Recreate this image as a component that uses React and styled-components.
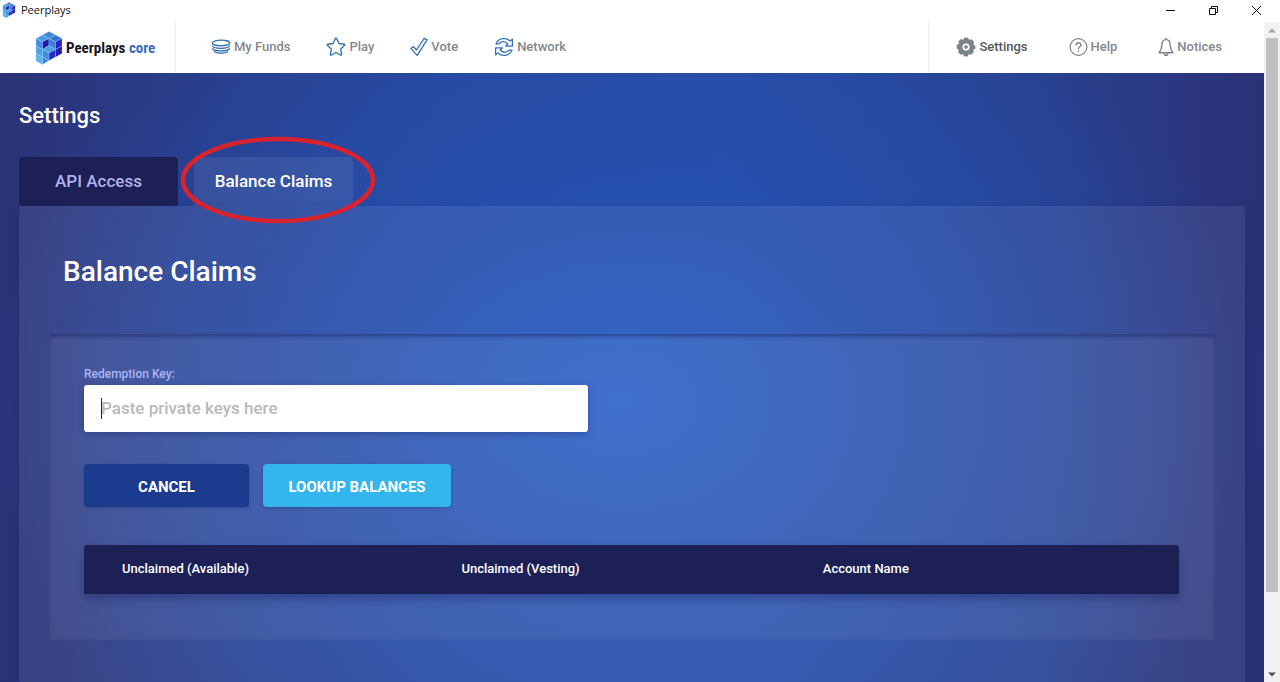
import React, { useState } from 'react';
import styled, { createGlobalStyle } from 'styled-components';

const GlobalStyle = createGlobalStyle`
  * {
    box-sizing: border-box;
  }

  body {
    margin: 0;
    background: #2b3a86;
    font-family: Roboto, 'Liberation Sans', sans-serif;
  }

  button, input {
    font-family: inherit;
  }
`;

const Window = styled.div`
  display: flex;
  flex-direction: column;
  height: 100vh;
  overflow: hidden;
  background: #ffffff;
`;

const TitleBar = styled.div`
  display: flex;
  align-items: center;
  justify-content: space-between;
  flex: none;
  height: 22px;
  padding: 0 2px 2px;
`;

const AppName = styled.div`
  display: flex;
  align-items: center;
  gap: 5px;
  font-family: 'Open Sans', 'Noto Sans', sans-serif;
  font-size: 11px;
  line-height: 20px;
  color: #111111;
`;

const WindowControls = styled.div`
  display: flex;
`;

const WindowButton = styled.button`
  display: flex;
  align-items: center;
  justify-content: center;
  width: 43px;
  height: 20px;
  padding: 0;
  border: none;
  background: none;
  color: #111111;
`;

const Viewport = styled.div`
  display: flex;
  flex: 1;
  min-height: 0;
`;

const Page = styled.div`
  display: flex;
  flex-direction: column;
  flex: 1;
  min-width: 0;
`;

const ScrollTrack = styled.div`
  display: flex;
  flex-direction: column;
  align-items: center;
  width: 16px;
  background: #f1f1f1;
`;

const ScrollArrow = styled.button`
  display: flex;
  align-items: center;
  justify-content: center;
  width: 16px;
  height: 16px;
  padding: 0;
  border: none;
  background: none;
  color: ${props => props.$disabled ? '#a3a3a3' : '#505050'};
`;

const ScrollThumb = styled.div`
  width: 12px;
  height: 84%;
  margin-bottom: auto;
  background: #c1c1c1;
`;

const Header = styled.header`
  display: flex;
  flex: none;
  height: 51px;
  background: #ffffff;
`;

const Brand = styled.a`
  display: flex;
  align-items: center;
  gap: 3px;
  width: 176px;
  padding: 1px 0 0 35px;
  border-right: 1px solid #ececf0;
  text-decoration: none;
`;

const BrandName = styled.span`
  font-family: 'Liberation Sans Narrow', 'Roboto Condensed', Roboto, sans-serif;
  font-size: 15px;
  font-weight: 700;
  white-space: nowrap;
  color: #16161c;

  span {
    color: #3a6db5;
  }
`;

const Nav = styled.nav`
  display: flex;
  align-items: center;
  gap: ${props => props.$gap};
  padding: ${props => props.$padding};
  margin-left: ${props => props.$right ? 'auto' : 0};
  border-left: ${props => props.$right ? '1px solid #ececf0' : 'none'};
`;

const NavLink = styled.a`
  display: flex;
  align-items: center;
  gap: 3px;
  font-size: 13px;
  font-weight: 500;
  text-decoration: none;
  color: ${props => props.$active ? '#54575a' : '#85888b'};

  svg {
    color: ${props => props.$tint};
  }
`;

const Main = styled.main`
  display: flex;
  flex-direction: column;
  flex: 1;
  min-height: 0;
  padding: 28px 19px 0;
  background:
    radial-gradient(ellipse 52% 76% at 49% 54%, #255dc6 0%, rgba(38, 84, 184, 0.7) 40%, rgba(38, 76, 165, 0) 100%),
    linear-gradient(90deg, #2c3276 0%, #2a3a84 10%, #27479a 36%, #274ba1 58%, #28418f 82%, #2c3177 100%);
`;

const PageTitle = styled.h1`
  margin: 0 0 26px;
  font-size: 22px;
  line-height: 30px;
  font-weight: 500;
  color: #ffffff;
`;

const Tabs = styled.div`
  display: flex;
  gap: 16px;
`;

const Tab = styled.button`
  position: relative;
  width: 159px;
  height: 49px;
  padding: 0 0 2px;
  border: none;
  border-radius: 4px 4px 0 0;
  font-size: 17px;
  font-weight: 500;
  color: ${props => props.$active ? '#ffffff' : '#b3b1ee'};
  background: ${props => props.$active ? 'rgba(255, 255, 255, 0.08)' : '#1c2054'};
`;

const Highlight = styled.svg`
  position: absolute;
  left: -14px;
  top: -21px;
  pointer-events: none;
`;

const Panel = styled.section`
  flex: 1;
  padding: 48px 30px 0;
  background: rgba(255, 255, 255, 0.07);
  box-shadow: 0 6px 12px rgba(20, 24, 80, 0.25);
`;

const PanelTitle = styled.h2`
  margin: 0 0 44px 14px;
  font-size: 28px;
  line-height: 36px;
  font-weight: 500;
  color: #ffffff;
`;

const Card = styled.div`
  padding: 32px 36px 46px 35px;
  border-radius: 4px;
  background: rgba(255, 255, 255, 0.06);
  box-shadow:
    inset 0 4px 4px -2px rgba(24, 28, 80, 0.5),
    inset 0 0 4px rgba(24, 28, 90, 0.12);
`;

const Label = styled.label`
  display: block;
  margin-bottom: 3px;
  font-size: 12px;
  line-height: 16px;
  font-weight: 500;
  color: #adb3f5;
`;

const Field = styled.div`
  position: relative;
  width: 46%;
`;

const Caret = styled.span`
  position: absolute;
  left: 17px;
  top: 13px;
  width: 1px;
  height: 21px;
  background: #222222;
`;

const KeyInput = styled.input`
  display: block;
  width: 100%;
  height: 47px;
  padding: 0 17px 2px;
  border: none;
  border-radius: 3px;
  outline: none;
  background: #ffffff;
  font-size: 17px;
  font-weight: 500;
  color: #333333;
  box-shadow: 0 2px 6px rgba(24, 28, 90, 0.35);

  &::placeholder {
    color: #b9b9bb;
    opacity: 1;
  }
`;

const Actions = styled.div`
  display: flex;
  gap: 14px;
  margin: 32px 0 38px;
`;

const Button = styled.button`
  height: 43px;
  min-width: ${props => props.$primary ? '188px' : '165px'};
  padding: 2px 16px 0;
  border: none;
  border-radius: 4px;
  font-size: 15px;
  font-weight: 700;
  color: #ffffff;
  background: ${props => props.$primary ? '#35b5ee' : '#1b3b8f'};
  box-shadow: 0 1px 3px rgba(24, 28, 90, 0.3);
`;

const Table = styled.table`
  width: 100%;
  border-collapse: collapse;
  table-layout: fixed;
  border-radius: 3px 3px 0 0;
  overflow: hidden;
  background: #1c2054;
  box-shadow: 0 5px 10px rgba(24, 28, 90, 0.4);
`;

const HeadCell = styled.th`
  width: ${props => props.$width};
  height: 49px;
  padding: 0 0 2px 38px;
  text-align: left;
  font-size: 13px;
  font-weight: 500;
  color: #ffffff;
`;

const CubeLogo = ({ width, height }) => (
  <svg width={width} height={height} viewBox="0 0 28 34" aria-hidden="true">
    <g stroke="#a3cdf5" strokeWidth="0.35" strokeLinejoin="round">
      <path d="M14 0.5 20.5 4 14 7.5 7.5 4Z" fill="#3f87da" />
      <path d="M7.5 4 14 7.5 7.5 11 1 7.5Z" fill="#4a9ae4" />
      <path d="M20.5 4 27 7.5 20.5 11 14 7.5Z" fill="#3576d0" />
      <path d="M1 7.5 7.5 11V18.5L1 15Z" fill="#3f92e0" />
      <path d="M7.5 11 14 7.5V14.5L7.5 18.5Z" fill="#2418a8" />
      <path d="M14 7.5 20.5 11V18.5L14 14.5Z" fill="#3a80d8" />
      <path d="M20.5 11 27 7.5V15L20.5 18.5Z" fill="#2a22c4" />
      <path d="M14 14.5 20.5 18.5 14 22 7.5 18.5Z" fill="#4a9fe8" />
      <path d="M1 15 7.5 18.5V26L1 22.5Z" fill="#4aa4ea" />
      <path d="M7.5 18.5 14 22V29.5L7.5 26Z" fill="#3c8fe0" />
      <path d="M14 22 20.5 18.5V26L14 29.5Z" fill="#2b2ac8" />
      <path d="M20.5 18.5 27 15V22.5L20.5 26Z" fill="#2119b0" />
      <path d="M1 22.5 7.5 26V33.5L1 30Z" fill="#5ab4f0" />
      <path d="M7.5 26 14 29.5 7.5 33.5Z" fill="#3f86dd" />
    </g>
  </svg>
);

const FundsIcon = () => (
  <svg width="20" height="20" viewBox="0 0 20 20" fill="none" stroke="currentColor" strokeWidth="1.3" aria-hidden="true">
    <ellipse cx="10" cy="6" rx="8.8" ry="2.8" />
    <path d="M1.2 8.8C3 12.2 17 12.2 18.8 8.8M1.2 11.4C3 14.8 17 14.8 18.8 11.4M3 14.6C6 16.8 14 16.8 17 14.6" />
  </svg>
);

const StarIcon = () => (
  <svg width="20" height="20" viewBox="0 0 20 20" fill="none" stroke="currentColor" strokeWidth="1.4" strokeLinejoin="round" aria-hidden="true">
    <path d="M10 1.2Q10.6 1.2 10.9 2L12.9 6.5 18 7.2Q19.4 7.5 18.4 8.6L14.7 12 15.6 17.1Q15.6 18.6 14.3 18L10 15.5 5.7 18Q4.4 18.6 4.4 17.1L5.3 12 1.6 8.6Q0.6 7.5 2 7.2L7.1 6.5 9.1 2Q9.4 1.2 10 1.2Z" />
  </svg>
);

const VoteIcon = () => (
  <svg width="18" height="20" viewBox="0 0 18 20" fill="none" stroke="currentColor" strokeWidth="1.3" strokeLinejoin="round" aria-hidden="true">
    <path d="M1 11.6 3.6 9.6 6.4 13 14.2 1.4 17 2.8 7.2 18.4Z" />
  </svg>
);

const NetworkIcon = () => (
  <svg width="20" height="20" viewBox="0 0 20 20" fill="none" stroke="currentColor" strokeWidth="1.3" strokeLinejoin="round" aria-hidden="true">
    <path d="M2 6.8C4.5 1 12 0 16 4L18.4 2.2V9.2H11.6L13.8 7C11 3.8 7 4 5 6.8Z" />
    <path d="M18 13.2C15.5 19 8 20 4 16L1.6 17.8V10.8H8.4L6.2 13C9 16.2 13 16 15 13.2Z" />
  </svg>
);

const GearIcon = () => (
  <svg width="20" height="20" viewBox="0 0 20 20" fill="none" stroke="currentColor" aria-hidden="true">
    <circle cx="10" cy="10" r="5.8" strokeWidth="5" />
    <circle cx="10" cy="10" r="8.2" strokeWidth="2.4" strokeDasharray="4 2.44" strokeDashoffset="2" />
    <circle cx="10" cy="10" r="2" fill="currentColor" stroke="none" />
    <circle cx="10" cy="10" r="2.8" stroke="#ffffff" strokeWidth="1.4" />
  </svg>
);

const HelpIcon = () => (
  <svg width="19" height="20" viewBox="0 0 19 20" fill="none" stroke="currentColor" strokeWidth="1.2" strokeLinecap="round" aria-hidden="true">
    <circle cx="9.5" cy="10" r="8.4" />
    <path d="M7.2 8C7.2 4.9 11.9 5 11.9 7.8 11.9 9.8 9.5 9.7 9.5 11.8M9.5 14V14.3" strokeWidth="1.4" />
  </svg>
);

const BellIcon = () => (
  <svg width="16" height="20" viewBox="0 0 16 20" fill="none" stroke="currentColor" strokeWidth="1.4" strokeLinejoin="round" aria-hidden="true">
    <path d="M8 2.6C4.6 2.6 3.8 5.4 3.8 8.2 3.8 12.4 2.6 13.6 1 15.8H15C13.4 13.6 12.2 12.4 12.2 8.2 12.2 5.4 11.4 2.6 8 2.6Z" />
    <path d="M8 2.4V1M6.2 16.2C6.2 19 9.8 19 9.8 16.2" />
  </svg>
);

const mainLinks = [
  { text: 'My Funds', icon: <FundsIcon /> },
  { text: 'Play', icon: <StarIcon /> },
  { text: 'Vote', icon: <VoteIcon /> },
  { text: 'Network', icon: <NetworkIcon /> },
];

const sideLinks = [
  { text: 'Settings', icon: <GearIcon />, active: true },
  { text: 'Help', icon: <HelpIcon /> },
  { text: 'Notices', icon: <BellIcon /> },
];

const columns = [
  { text: 'Unclaimed (Available)', width: '31%' },
  { text: 'Unclaimed (Vesting)', width: '33%' },
  { text: 'Account Name', width: '36%' },
];

const App = () => {
  const [tab, setTab] = useState('claims');
  const [keys, setKeys] = useState('');

  return (
    <Window>
      <GlobalStyle />
      <TitleBar>
        <AppName>
          <CubeLogo width={14} height={16} />
          Peerplays
        </AppName>
        <WindowControls>
          <WindowButton aria-label="Minimize">
            <svg width="11" height="11" viewBox="0 0 11 11" stroke="currentColor">
              <path d="M1 5.5H10" />
            </svg>
          </WindowButton>
          <WindowButton aria-label="Restore">
            <svg width="11" height="11" viewBox="0 0 11 11" fill="none" stroke="currentColor">
              <path d="M1.5 3.5H7.5V9.5H1.5ZM3.5 3V1.5H9.5V7.5H8" />
            </svg>
          </WindowButton>
          <WindowButton aria-label="Close">
            <svg width="11" height="11" viewBox="0 0 11 11" stroke="currentColor">
              <path d="M1 1 10 10M10 1 1 10" />
            </svg>
          </WindowButton>
        </WindowControls>
      </TitleBar>

      <Viewport>
        <Page>
          <Header>
            <Brand href="#home">
              <CubeLogo width={28} height={34} />
              <BrandName>Peerplays <span>core</span></BrandName>
            </Brand>
            <Nav $gap="36px" $padding="0 0 2px 35px">
              {mainLinks.map(link => (
                <NavLink key={link.text} href="#" $tint="#3572b0">
                  {link.icon}
                  {link.text}
                </NavLink>
              ))}
            </Nav>
            <Nav $right $gap="41px" $padding="0 42px 2px 27px">
              {sideLinks.map(link => (
                <NavLink key={link.text} href="#" $active={link.active} $tint="#7b8388">
                  {link.icon}
                  {link.text}
                </NavLink>
              ))}
            </Nav>
          </Header>

          <Main>
            <PageTitle>Settings</PageTitle>
            <Tabs role="tablist">
              <Tab role="tab" $active={tab === 'api'} onClick={() => setTab('api')}>
                API Access
              </Tab>
              <Tab role="tab" $active={tab === 'claims'} onClick={() => setTab('claims')}>
                Balance Claims
                <Highlight width="196" height="88" viewBox="0 0 196 88" fill="none">
                  <ellipse cx="98" cy="44" rx="95" ry="41" stroke="#d8232f" strokeWidth="4.5" />
                </Highlight>
              </Tab>
            </Tabs>
            <Panel>
              <PanelTitle>Balance Claims</PanelTitle>
              <Card>
                <Label htmlFor="redemption-key">Redemption Key:</Label>
                <Field>
                  <KeyInput
                    id="redemption-key"
                    placeholder="Paste private keys here"
                    value={keys}
                    onChange={e => setKeys(e.target.value)}
                  />
                  {!keys && <Caret />}
                </Field>
                <Actions>
                  <Button>CANCEL</Button>
                  <Button $primary>LOOKUP BALANCES</Button>
                </Actions>
                <Table>
                  <thead>
                    <tr>
                      {columns.map(column => (
                        <HeadCell key={column.text} $width={column.width}>{column.text}</HeadCell>
                      ))}
                    </tr>
                  </thead>
                </Table>
              </Card>
            </Panel>
          </Main>
        </Page>

        <ScrollTrack>
          <ScrollArrow aria-label="Scroll up" $disabled>
            <svg width="8" height="5" viewBox="0 0 8 5" fill="currentColor">
              <path d="M0 4.5 4 0.5 8 4.5Z" />
            </svg>
          </ScrollArrow>
          <ScrollThumb />
          <ScrollArrow aria-label="Scroll down">
            <svg width="8" height="5" viewBox="0 0 8 5" fill="currentColor">
              <path d="M0 0.5 4 4.5 8 0.5Z" />
            </svg>
          </ScrollArrow>
        </ScrollTrack>
      </Viewport>
    </Window>
  );
};

export default App;
